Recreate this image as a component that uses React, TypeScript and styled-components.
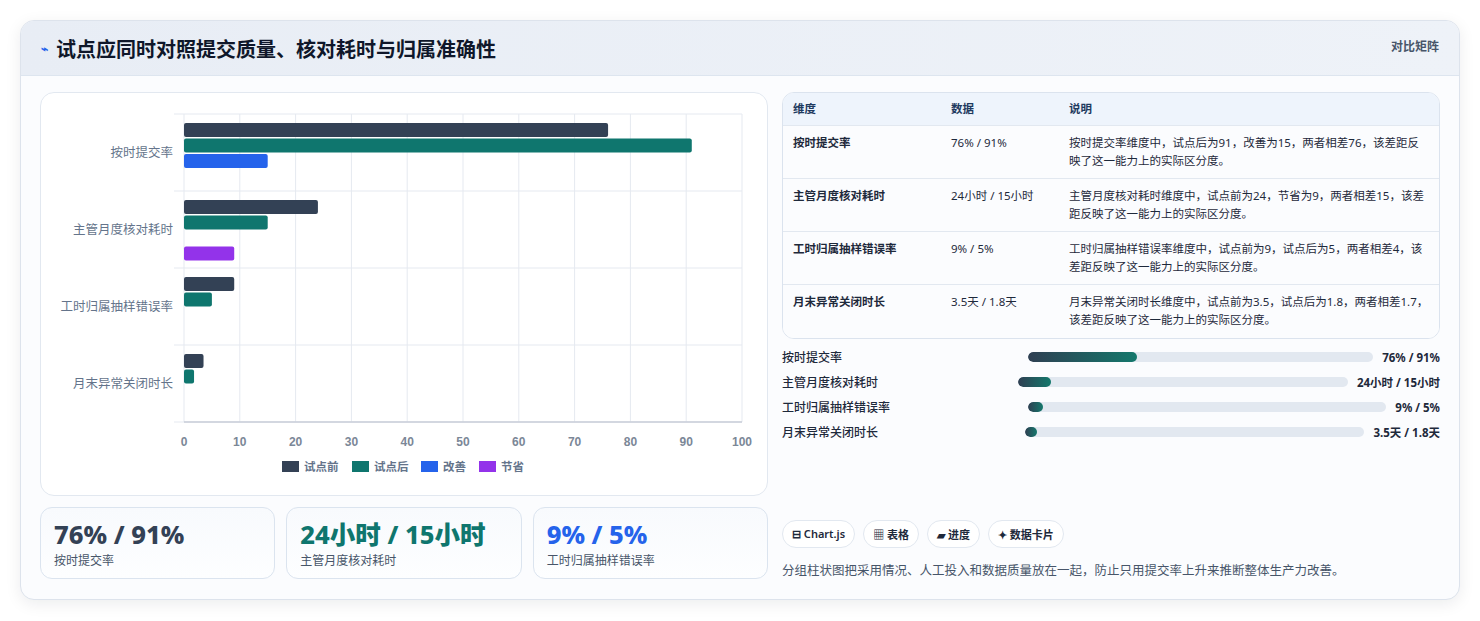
import React from "react";
import styled, { createGlobalStyle } from "styled-components";

const Global = createGlobalStyle`
  body { margin: 0; background: #f3f5f9; font-family: "Noto Sans", "Noto Sans CJK SC", sans-serif; }
`;
const Page = styled.div`padding: 20px 20px 21px; background: #ffffff; height: 580px;`;
const Card = styled.div`
  border: 1px solid #dde3ec; border-radius: 14px; background: #fbfcfe; height: 578px;
  box-shadow: 0 4px 16px rgba(15,23,42,0.08); overflow: hidden; display: flex; flex-direction: column;
`;
const Header = styled.div`
  height: 54px; display: flex; align-items: center; justify-content: space-between; padding: 0 20px;
  background: linear-gradient(90deg, #e8edf5, #eef2f8); border-bottom: 1px solid #dde5ef;
`;
const Title = styled.h1`margin: 0; font-size: 20px; font-weight: 700; color: #0f172a; display: flex; align-items: center; gap: 8px;`;
const HeaderTag = styled.span`font-size: 12px; color: #475569; font-weight: 600; align-self: flex-start; margin-top: 16px;`;
const Body = styled.div`display: grid; grid-template-columns: 728px 658px; gap: 14px; padding: 16px 19px 0;`;
const Col = styled.div`display: flex; flex-direction: column;`;
const ChartBox = styled.div`border: 1px solid #e2e8f0; border-radius: 14px; background: #fff; height: 402px;`;
const Stats = styled.div`display: grid; grid-template-columns: repeat(3, 1fr); gap: 11px; margin-top: 11px;`;
const Stat = styled.div`border: 1px solid #dbe4ef; border-radius: 12px; background: linear-gradient(180deg,#f8fafd,#fdfeff); height: 72px; padding: 11px 13px; box-sizing: border-box;`;
const StatVal = styled.div<{ $c: string }>`font-size: 25.5px; font-weight: 800; color: ${p => p.$c}; line-height: 30px;`;
const StatLabel = styled.div`font-size: 12px; color: #475569; margin-top: 2px;`;
const Table = styled.div`border: 1px solid #dbe3ee; border-radius: 12px; overflow: hidden; background: #fff;`;
const Row = styled.div<{ $head?: boolean }>`
  display: grid; grid-template-columns: 158px 118px 1fr; padding: 0 10px;
  font-size: 11.5px; color: #1e293b; line-height: 18px;
  ${p => p.$head ? "height:32px;align-items:center;background:#eef4fc;font-weight:700;color:#1e3a5f;" : "height:53px;padding-top:8px;box-sizing:border-box;background:#fbfcfe;"}
  border-bottom: 1px solid #e2e8f0;
  &:last-child { border-bottom: none; }
  & > span:first-child { font-weight: 600; }
`;
const Bars = styled.div`display: flex; flex-direction: column; gap: 7px; margin-top: 9px;`;
const BarRow = styled.div`display: flex; align-items: center; height: 18px; font-size: 12px; color: #1e293b; font-weight: 500;`;
const BarLabel = styled.span`flex: 1;`;
const Track = styled.div<{ $w: number }>`width: ${p => p.$w}px; height: 10px; border-radius: 5px; background: #e2e8f0; overflow: hidden;`;
const Fill = styled.div`height: 100%; border-radius: 5px; background: linear-gradient(90deg,#2f3f52,#14786c);`;
const BarVal = styled.span`margin-left: 9px; font-weight: 700; font-size: 11.5px;`;
const Chips = styled.div`display: flex; gap: 8px; margin-top: auto;`;
const Chip = styled.span`border: 1px solid #e2e8f0; border-radius: 14px; background: #fff; padding: 5px 9px; font-size: 11px; font-weight: 600; color: #1e293b;`;
const Note = styled.p`margin: 12px 0 0; font-size: 12.5px; color: #475569;`;

const groups = [
  { label: "按时提交率", v: [76, 91, 15, null] },
  { label: "主管月度核对耗时", v: [24, 15, null, 9] },
  { label: "工时归属抽样错误率", v: [9, 5, null, null] },
  { label: "月末异常关闭时长", v: [3.5, 1.8, null, null] },
];
const colors = ["#334155", "#0f766e", "#2563eb", "#9333ea"];
const names = ["试点前", "试点后", "改善", "节省"];

function Chart() {
  const x0 = 143, w = 558, y0 = 21, gh = 77;
  return (
    <svg width="728" height="402" style={{ display: "block" }}>
      {Array.from({ length: 11 }).map((_, i) => (
        <g key={i}>
          <line x1={x0 + i * w / 10} x2={x0 + i * w / 10} y1={y0} y2={y0 + 4 * gh} stroke="#e5e9f0" />
          <text x={x0 + i * w / 10} y={y0 + 4 * gh + 24} textAnchor="middle" fontSize="12" fontWeight="600" fill="#7b8797" fontFamily="Liberation Sans, sans-serif">{i * 10}</text>
        </g>
      ))}
      {[0, 1, 2, 3, 4].map(i => <line key={i} x1={x0 - 10} x2={x0 + w} y1={y0 + i * gh} y2={y0 + i * gh} stroke="#e5e9f0" />)}
      <line x1={x0} x2={x0 + w} y1={y0 + 4 * gh} y2={y0 + 4 * gh} stroke="#c8ced8" strokeWidth="1.5" />
      {groups.map((g, gi) => (
        <g key={gi}>
          <text x={x0 - 11} y={y0 + gi * gh + gh / 2 + 4} textAnchor="end" fontSize="12.5" fill="#64748b">{g.label}</text>
          {g.v.map((v, k) => v == null ? null : (
            <rect key={k} x={x0} y={y0 + gi * gh + 9 + k * 15.5} width={v * w / 100} height={14} rx={2} fill={colors[k]} />
          ))}
        </g>
      ))}
      <g transform="translate(241,373)">
        {names.map((n, i) => {
          const off = [0, 70, 139, 197][i];
          return (
            <g key={i} transform={`translate(${off},0)`}>
              <rect x={0} y={-5} width={17} height={11} fill={colors[i]} />
              <text x={22} y={5} fontSize="11.5" fontWeight="600" fill="#64748b">{n}</text>
            </g>
          );
        })}
      </g>
    </svg>
  );
}

const rows = [
  ["按时提交率", "76% / 91%", "按时提交率维度中，试点后为91，改善为15，两者相差76，该差距反映了这一能力上的实际区分度。"],
  ["主管月度核对耗时", "24小时 / 15小时", "主管月度核对耗时维度中，试点前为24，节省为9，两者相差15，该差距反映了这一能力上的实际区分度。"],
  ["工时归属抽样错误率", "9% / 5%", "工时归属抽样错误率维度中，试点前为9，试点后为5，两者相差4，该差距反映了这一能力上的实际区分度。"],
  ["月末异常关闭时长", "3.5天 / 1.8天", "月末异常关闭时长维度中，试点前为3.5，试点后为1.8，两者相差1.7，该差距反映了这一能力上的实际区分度。"],
];
const bars = [
  { l: "按时提交率", v: "76% / 91%", w: 345, f: 31.5 },
  { l: "主管月度核对耗时", v: "24小时 / 15小时", w: 330, f: 10 },
  { l: "工时归属抽样错误率", v: "9% / 5%", w: 358, f: 4 },
  { l: "月末异常关闭时长", v: "3.5天 / 1.8天", w: 339, f: 3.5 },
];

export default function App() {
  return (
    <Page>
      <Global />
      <Card>
        <Header>
          <Title><span style={{ color: "#2563eb", fontSize: 12 }}>⌁</span>试点应同时对照提交质量、核对耗时与归属准确性</Title>
          <HeaderTag>对比矩阵</HeaderTag>
        </Header>
        <Body>
          <Col>
            <ChartBox><Chart /></ChartBox>
            <Stats>
              <Stat><StatVal $c="#334155">76% / 91%</StatVal><StatLabel>按时提交率</StatLabel></Stat>
              <Stat><StatVal $c="#0f766e">24小时 / 15小时</StatVal><StatLabel>主管月度核对耗时</StatLabel></Stat>
              <Stat><StatVal $c="#2563eb">9% / 5%</StatVal><StatLabel>工时归属抽样错误率</StatLabel></Stat>
            </Stats>
          </Col>
          <Col>
            <Table>
              <Row $head><span>维度</span><span>数据</span><span>说明</span></Row>
              {rows.map(r => <Row key={r[0]}><span>{r[0]}</span><span>{r[1]}</span><span>{r[2]}</span></Row>)}
            </Table>
            <Bars>
              {bars.map(b => (
                <BarRow key={b.l}>
                  <BarLabel>{b.l}</BarLabel>
                  <Track $w={b.w}><Fill style={{ width: `${b.f}%` }} /></Track>
                  <BarVal>{b.v}</BarVal>
                </BarRow>
              ))}
            </Bars>
            <Chips>
              <Chip>⊟ Chart.js</Chip><Chip>▦ 表格</Chip><Chip>▰ 进度</Chip><Chip>✦ 数据卡片</Chip>
            </Chips>
            <Note>分组柱状图把采用情况、人工投入和数据质量放在一起，防止只用提交率上升来推断整体生产力改善。</Note>
          </Col>
        </Body>
      </Card>
    </Page>
  );
}
